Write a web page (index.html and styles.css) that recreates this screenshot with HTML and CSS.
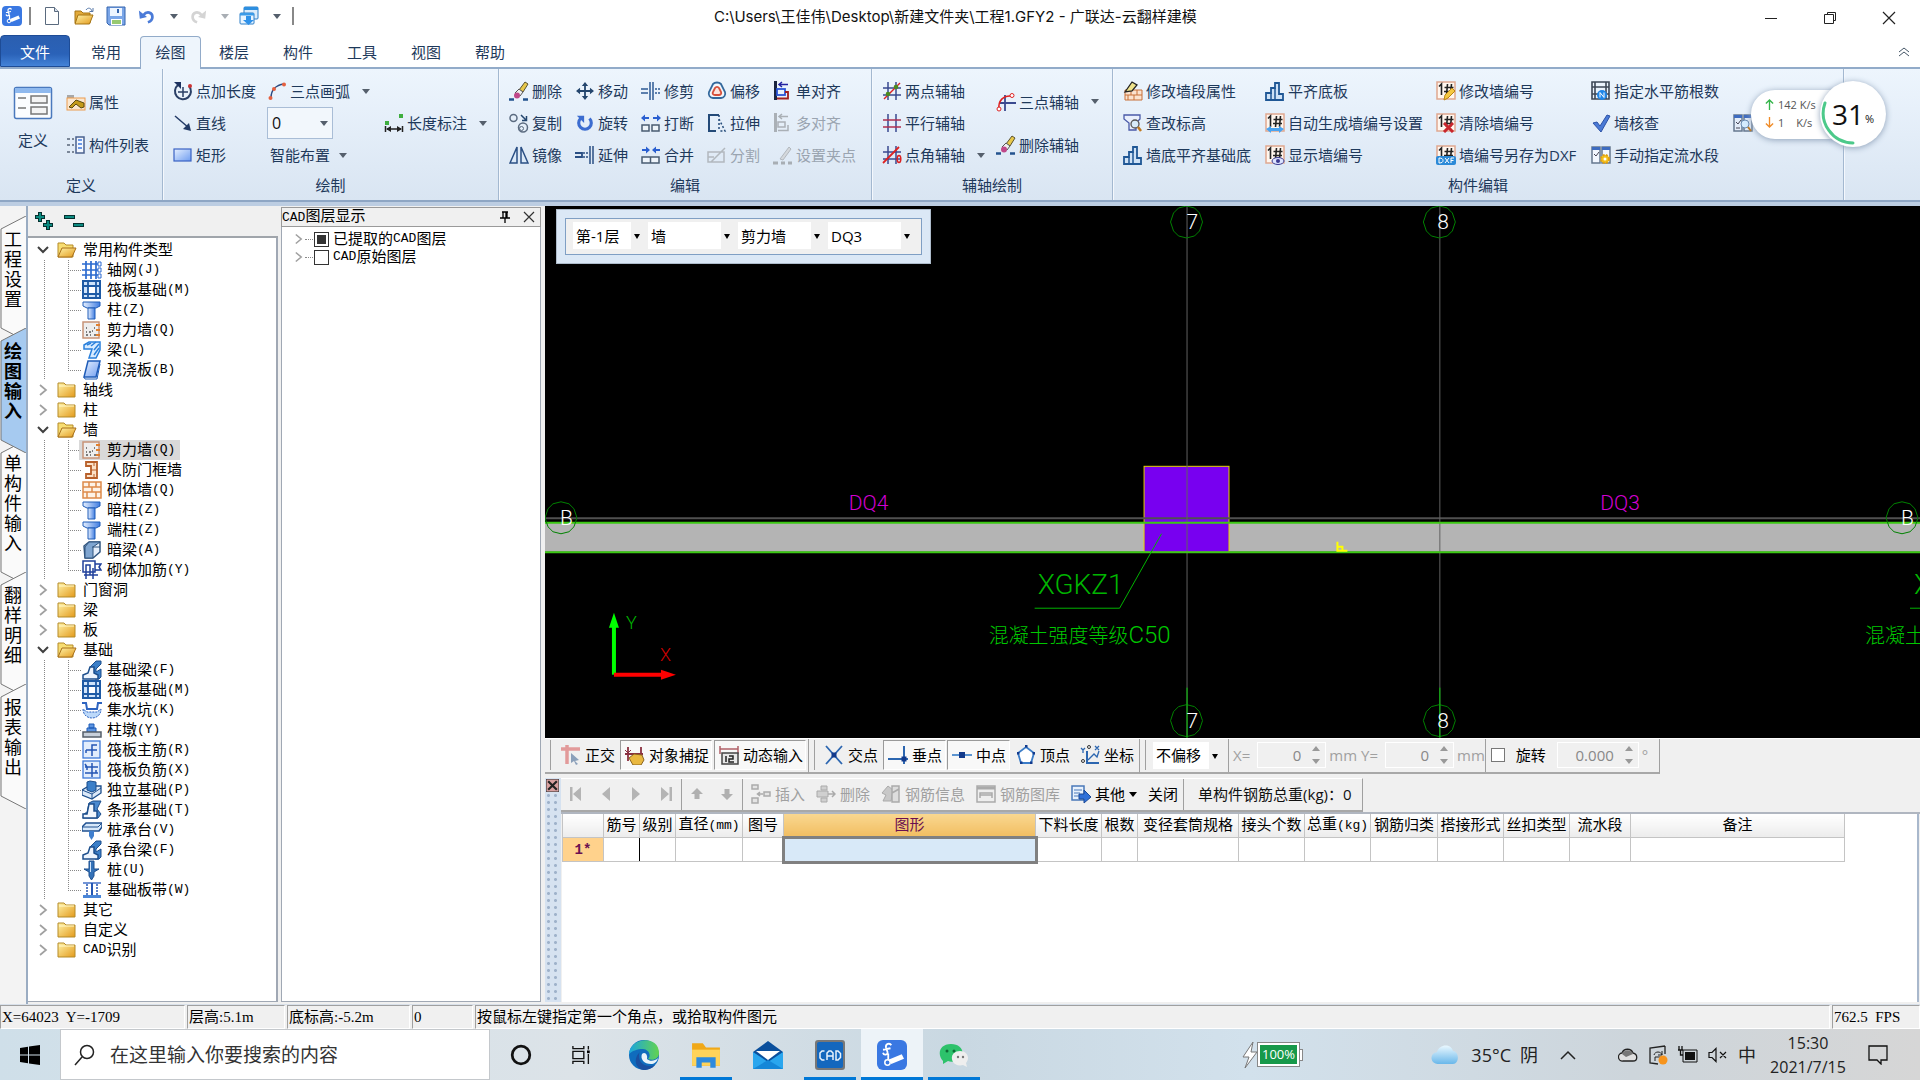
FILE: index.html
```html
<!DOCTYPE html>
<html lang="zh-CN">
<head>
<meta charset="utf-8">
<title>广联达-云翻样建模</title>
<link rel="stylesheet" href="styles.css">
</head>
<body>
<svg class="defs" aria-hidden="true">
<defs>
<linearGradient id="gFold" x1="0" y1="0" x2="1" y2="1"><stop offset="0" stop-color="#fff3a8"/><stop offset="1" stop-color="#e39a1c"/></linearGradient>
<linearGradient id="gBlue" x1="0" y1="0" x2="1" y2="1"><stop offset="0" stop-color="#e6f0ff"/><stop offset="1" stop-color="#6f9df0"/></linearGradient>
<linearGradient id="gCol" x1="0" y1="0" x2="1" y2="0"><stop offset="0" stop-color="#e6f0ff"/><stop offset="1" stop-color="#3f7ce0"/></linearGradient>
<linearGradient id="gCloud" x1="0" y1="0" x2="0" y2="1"><stop offset="0" stop-color="#eaf8ff"/><stop offset="1" stop-color="#69b7ea"/></linearGradient>
<linearGradient id="gEdge" x1="0" y1="0" x2="1" y2="0"><stop offset="0" stop-color="#1ba5de"/><stop offset="1" stop-color="#63d34f"/></linearGradient>
</defs>
<symbol id="logo" viewBox="0 0 20 20"><rect width="20" height="20" rx="4" fill="#3a78e2"/><path d="M9.500 3.500c-1-1.800-4-1-3.500 1.500l1 3c.5 2-2.500 2.500-3 .5M4 6.500l5-1M7.500 9v4" stroke="#fff" stroke-width="1.200" fill="none"/><path d="M8 13l8.500-3.500 1.500 3L9.500 16z" fill="#fff"/><circle cx="7" cy="15" r="1.800" fill="none" stroke="#fff"/></symbol>
<symbol id="new" viewBox="0 0 20 20"><path d="M3.500 1.500h9l4 4v13h-13z" fill="#fff" stroke="#5a6a7e"/><path d="M12.500 1.500v4h4" fill="#d6dfec" stroke="#5a6a7e"/></symbol>
<symbol id="open" viewBox="0 0 20 20"><path d="M1 5h6l2 2h7v10H1z" fill="#e2aa3a" stroke="#a57414"/><path d="M4 9h15l-3.500 9H1z" fill="url(#gFold)" stroke="#a57414"/><path d="M12 4c2-3 5-2 6 1m1-3v3.500h-3.500" stroke="#5577a8" fill="none"/></symbol>
<symbol id="save" viewBox="0 0 20 20"><path d="M1 1h18v18H3l-2-2z" fill="#7ba6e8" stroke="#3565ae"/><rect x="4" y="2" width="12" height="8" fill="#eef5ff"/><rect x="5" y="13" width="11" height="6" fill="#fff"/><path d="M6 15h9M6 17h9" stroke="#76b843" stroke-width="1.500"/><rect x="11" y="3" width="2" height="4" fill="#3565ae"/></symbol>
<symbol id="undo" viewBox="0 0 20 20"><path d="M6 9c4-5 10-3 10 2 0 3-2 5-5 6" fill="none" stroke="#4b7bd8" stroke-width="3"/><path d="M1 4l1 9 8-2z" fill="#4b7bd8"/></symbol>
<symbol id="redo" viewBox="0 0 20 20"><path d="M14 9C10 4 4 6 4 11c0 3 2 5 5 6" fill="none" stroke="#d4d4d4" stroke-width="3"/><path d="M19 4l-1 9-8-2z" fill="#d4d4d4"/></symbol>
<symbol id="windows" viewBox="0 0 20 20"><rect x="5" y="1" width="14" height="12" rx="1" fill="#dcecfb" stroke="#2d7fc8"/><rect x="5" y="1" width="14" height="3" fill="#2d8fe0"/><rect x="1" y="7" width="14" height="11" rx="1" fill="#eaf5ff" stroke="#2d7fc8"/><rect x="1" y="7" width="14" height="2.500" fill="#3c9be8"/><path d="M7 10h5v4h3l-5.500 5L4 14h3z" fill="#2f92ea"/></symbol>
<symbol id="define" viewBox="0 0 40 34"><rect x="1.500" y="1.500" width="37" height="31" rx="2" fill="#fbfdff" stroke="#4a79bd" stroke-width="1.500"/><path d="M2 2h36v5H2z" fill="#8fb9ee"/><path d="M5 12h8M5 22h8" stroke="#777" stroke-width="1.500"/><rect x="18" y="10" width="16" height="7" fill="#f4f4f4" stroke="#777" stroke-width="1.500"/><rect x="18" y="21" width="16" height="7" fill="#f4f4f4" stroke="#777" stroke-width="1.500"/></symbol>
<symbol id="prop" viewBox="0 0 20 20"><path d="M1 3h7v3H1z" fill="#a8a8a8"/><rect x="1" y="6" width="18" height="12" fill="#fbe7cf" stroke="#ec9b4f"/><path d="M3 15l7-7 8 3v4l-3 1-5-4-4 4z" fill="#c39a1a" stroke="#5a4a10"/></symbol>
<symbol id="list" viewBox="0 0 20 20"><rect x="10" y="2" width="8" height="16" fill="#f3f7ff" stroke="#49618e" stroke-width="1.500"/><path d="M12 5h4M12 9h4M12 13h4" stroke="#3f7be0" stroke-width="1.500"/><path d="M1 4h3M1 10h3M1 17h3M6 4h2M6 10h2M6 17h2" stroke="#7b8798" stroke-width="2"/></symbol>
<symbol id="ptlen" viewBox="0 0 20 20"><path d="M5 4a8 8 0 1 0 11 1" fill="none" stroke="#2a3f66" stroke-width="2"/><path d="M1 1h7v7z" fill="#1d3260"/><path d="M10 6v10M5 11h10" stroke="#2a3f66" stroke-width="1.500"/><circle cx="17" cy="5" r="2" fill="#c33"/></symbol>
<symbol id="line" viewBox="0 0 20 20"><path d="M2 3l14 12" stroke="#223a66" stroke-width="1.500"/><path d="M18 18l-8-2 6-6z" fill="#223a66"/></symbol>
<symbol id="rect" viewBox="0 0 20 20"><rect x="1" y="4" width="17" height="12" fill="url(#gBlue)" stroke="#3a62c4" stroke-width="1.200"/></symbol>
<symbol id="arc" viewBox="0 0 20 20"><path d="M4 17C4 9 9 4 17 3" fill="none" stroke="#2a4a80" stroke-width="1.500"/><g fill="#e5603f"><circle cx="3.500" cy="17" r="2"/><circle cx="7" cy="8" r="2"/><circle cx="17" cy="3.500" r="2"/></g></symbol>
<symbol id="dim" viewBox="0 0 20 20"><path d="M1.500 13v6M18.500 13v6M3 16h14" stroke="#222" stroke-width="1.500"/><path d="M2 16l5-3v6zM18 16l-5-3v6z" fill="#222"/><rect x="1" y="8" width="4" height="4" fill="#3fae3f"/><rect x="15" y="1" width="4" height="4" fill="#3fae3f"/></symbol>
<symbol id="erase" viewBox="0 0 20 20"><path d="M10 9l6-8 3 2-5 8z" fill="#e8c84a" stroke="#5a5230"/><path d="M6 12l4-4 4 3-3 4z" fill="#eee" stroke="#555"/><circle cx="8" cy="14.500" r="3" fill="#c0488a"/><path d="M0 18.500h5M14 18.500h5" stroke="#23538f" stroke-width="2.500"/></symbol>
<symbol id="move" viewBox="0 0 20 20"><path d="M10 3v14M3 10h14" stroke="#24466e" stroke-width="2"/><path d="M10 0l3.500 4.500h-7zM10 20l3.500-4.500h-7zM0 10l4.500-3.500v7zM20 10l-4.500-3.500v7z" fill="#24466e"/></symbol>
<symbol id="trim" viewBox="0 0 20 20"><path d="M0 8h7M0 12h7" stroke="#2c5a94" stroke-width="1.500"/><path d="M9 1v18M12 1v18" stroke="#2c5a94" stroke-width="1.500"/><path d="M14 8h6M14 12h6" stroke="#2c5a94" stroke-width="1.500" stroke-dasharray="2 1"/></symbol>
<symbol id="offset" viewBox="0 0 20 20"><path d="M6 3c2-2 6-2 8 0l4 8c1 3-1 6-4 6H6c-3 0-5-3-4-6z" fill="#f2f7fc" stroke="#33689c" stroke-width="1.800"/><path d="M8 7c1-1.500 3-1.500 4 0l2 4c1 2-1 3-2 3H8c-2 0-3-1.500-2-3z" fill="#fce4de" stroke="#d6503b" stroke-width="1.800"/></symbol>
<symbol id="align" viewBox="0 0 20 20"><path d="M2.500 0v19" stroke="#1a2440" stroke-width="3"/><rect x="4" y="8" width="8" height="6" fill="none" stroke="#2b55d8" stroke-width="1.800"/><path d="M4 17.500h11V11h-3" fill="none" stroke="#a02020" stroke-width="1.800"/><path d="M6 3.500h9M9 1L6 3.500 9 6" stroke="#2222a0" stroke-width="1.500" fill="none"/></symbol>
<symbol id="alignx" viewBox="0 0 20 20"><path d="M2.500 0v19" stroke="#aab0b6" stroke-width="3"/><path d="M5 9h7v5H5zM5 17.500h10V12M6 3.500h9M9 1L6 3.500 9 6" fill="none" stroke="#aab0b6" stroke-width="1.500"/></symbol>
<symbol id="copy" viewBox="0 0 20 20"><circle cx="4.500" cy="5" r="3.500" fill="none" stroke="#5b6b80" stroke-width="1.500"/><circle cx="14" cy="14.500" r="4.500" fill="none" stroke="#5b6b80" stroke-width="1.500"/><circle cx="12.500" cy="15.500" r="2" fill="none" stroke="#5b6b80"/><path d="M12 2l5 5M17.500 3v4.500H13" stroke="#24466e" stroke-width="1.500" fill="none"/></symbol>
<symbol id="rotate" viewBox="0 0 20 20"><path d="M5 5a7 7 0 1 0 10 0" fill="none" stroke="#3b6cd0" stroke-width="3.500"/><path d="M1 2h8v8z" fill="#3b6cd0"/></symbol>
<symbol id="break" viewBox="0 0 20 20"><path d="M2 5h6M12 5h6" stroke="#2a5fd0" stroke-width="2"/><path d="M0 5l4-3.500v7zM20 5l-4-3.500v7z" fill="#2a5fd0"/><path d="M1 12h7v6H1zM11 12h7v6h-7z" fill="#eef4fa" stroke="#4a5c72" stroke-width="1.500"/></symbol>
<symbol id="join" viewBox="0 0 20 20"><path d="M1 5h6M13 5h6" stroke="#2a5fd0" stroke-width="2"/><path d="M9 5L5 1.500v7zM11 5l4-3.500v7z" fill="#2a5fd0"/><path d="M1 12h8.500v6H1zM9.500 12H18v6H9.500z" fill="#eef4fa" stroke="#4a5c72" stroke-width="1.500"/></symbol>
<symbol id="stretch" viewBox="0 0 20 20"><path d="M12 2H2v16h7" fill="none" stroke="#234a78" stroke-width="2"/><path d="M12 2v16M12 6l6 12h-6" fill="none" stroke="#234a78" stroke-width="1.500" stroke-dasharray="2 2"/></symbol>
<symbol id="mirror" viewBox="0 0 20 20"><path d="M8 2v16H1zM12 2v16h7z" fill="#dbe9f8" stroke="#2a4f84" stroke-width="1.500"/></symbol>
<symbol id="extend" viewBox="0 0 20 20"><path d="M0 8h7v4H0" fill="none" stroke="#2a4f84" stroke-width="1.800"/><path d="M8 8h6M8 12h6" stroke="#2a4f84" stroke-width="1.500" stroke-dasharray="2 1"/><path d="M15 1v18M18 1v18" stroke="#2a4f84" stroke-width="1.500"/></symbol>
<symbol id="split" viewBox="0 0 20 20"><path d="M1 7h16v10H1zM4 17L18 3M1 12h6" fill="none" stroke="#b2b8be" stroke-width="1.500"/></symbol>
<symbol id="grip" viewBox="0 0 20 20"><path d="M7 14L16 2l2 2-8 11z" fill="#d4d8dc" stroke="#b2b8be"/><path d="M0 18h5M8 18h4M15 18h4" stroke="#a8aeb4" stroke-width="3"/></symbol>
<symbol id="ax2" viewBox="0 0 20 20"><path d="M6 1v18M14 1v18M1 7h18M1 14h18" stroke="#3a4a90" stroke-width="1.500"/><path d="M2 18L18 2" stroke="#d22" stroke-width="1.500"/><circle cx="6" cy="13" r="2.300" fill="#4c8a20"/><circle cx="14" cy="6" r="2.300" fill="#4c8a20"/></symbol>
<symbol id="axp" viewBox="0 0 20 20"><path d="M6 1v18M14 1v18" stroke="#3a4a90" stroke-width="1.500"/><path d="M1 7h18M1 14h18" stroke="#b03050" stroke-width="1.500"/></symbol>
<symbol id="axa" viewBox="0 0 20 20"><path d="M6 1v18M14 1v18M1 7h18M1 14h18" stroke="#3a4a90" stroke-width="1.500"/><path d="M1 18L17 2" stroke="#d22" stroke-width="1.800"/><ellipse cx="17" cy="14" rx="1.800" ry="3.500" fill="none" stroke="#d22" stroke-width="1.500"/></symbol>
<symbol id="ax3" viewBox="0 0 20 20"><path d="M9 3v16M3 11h17" stroke="#3a4a90" stroke-width="1.800"/><path d="M3 17C2 9 7 3 16 4" fill="none" stroke="#d22" stroke-width="1.500"/><circle cx="3" cy="17" r="2" fill="#fff" stroke="#d22"/><circle cx="16" cy="3.500" r="2" fill="#fff" stroke="#d22"/></symbol>
<symbol id="brickpen" viewBox="0 0 20 20"><path d="M2 9h17v10H2z" fill="#fbe3cf" stroke="#c87038"/><path d="M2 14h17M8 9v5M14 9v5M5 14v5M11 14v5" stroke="#c87038"/><path d="M2 11L9 1l5 3-5 6z" fill="#eee28a" stroke="#222" stroke-width="1.300"/></symbol>
<symbol id="look" viewBox="0 0 20 20"><path d="M1 2h16v4l-4 4v7H6v-7L1 6z" fill="#e9effc" stroke="#4a5aa8" stroke-width="1.300"/><circle cx="12" cy="11" r="4" fill="#d8ecfa" stroke="#555" stroke-width="1.300"/><path d="M15 14l3 4" stroke="#c07a20" stroke-width="2.500"/></symbol>
<symbol id="flush" viewBox="0 0 20 20"><path d="M1 12h5V7h4V2h4v11h4v6H1z" fill="#cfe2f6" stroke="#1f5795" stroke-width="1.800"/><path d="M10 7v12M6 12v7" stroke="#1f5795" stroke-width="1.500"/></symbol>
<symbol id="num" viewBox="0 0 20 20"><rect x="1" y="1" width="18" height="17" fill="#fff6ee" stroke="#e0a890" stroke-width="1.500"/><path d="M3 5.500L5.500 3v11M11.500 3l-1 11M15.500 3l-1 11M8.500 6.500h9M8 10.500h9" fill="none" stroke="#222" stroke-width="1.600"/></symbol>
<symbol id="numset" viewBox="0 0 20 20"><use href="#num"/><path d="M1 16l5-3v2h8v-2l5 3-5 4v-2H6v2z" fill="#4aa3f0"/></symbol>
<symbol id="numeye" viewBox="0 0 20 20"><use href="#num"/><ellipse cx="13" cy="16" rx="6" ry="3.500" fill="#dce4ff" stroke="#3a3a90"/><circle cx="13" cy="16" r="2" fill="#3a3a90"/></symbol>
<symbol id="numpen" viewBox="0 0 20 20"><use href="#num"/><path d="M8 19l1-5 7-7 3 3-7 7z" fill="#f5c842" stroke="#b98414"/></symbol>
<symbol id="numx" viewBox="0 0 20 20"><use href="#num"/><path d="M8 10l9 9M17 10l-9 9" stroke="#c8262c" stroke-width="3"/></symbol>
<symbol id="numdxf" viewBox="0 0 20 20"><use href="#num"/><rect y="11" width="20" height="9" rx="2" fill="#2b8ad8"/><path d="M3 13v5c3 0 4-1 4-2.500S6 13 3 13zM9 13l4 5M13 13l-4 5M15 18v-5h3M15 15.500h2.500" stroke="#fff" fill="none"/></symbol>
<symbol id="rebar" viewBox="0 0 20 20"><path d="M1 1h17v17H1zM1 6h17M1 13h17M4 1v17M15 1v17" fill="none" stroke="#3d4756" stroke-width="1.600"/><circle cx="11" cy="14" r="5" fill="#1f86e8"/><path d="M9 16.500v-5l4 5v-5" stroke="#fff" fill="none"/></symbol>
<symbol id="check" viewBox="0 0 20 20"><path d="M2 10l4-1 3 4 7-11 3 1L10 19z" fill="#4a7ad6" stroke="#2d52a6"/></symbol>
<symbol id="flow" viewBox="0 0 20 20"><path d="M1 2h8v16H1zM11 2h8v16h-8z" fill="#f2f7ff" stroke="#65788f" stroke-width="1.500"/><path d="M1 2h8v3H1zM11 2h8v3h-8z" fill="#3e6cc0"/><path d="M3 9l2 2 3-4" stroke="#445" fill="none"/><circle cx="14" cy="14" r="4" fill="#f6c31c" stroke="#e0a010" stroke-width="2" stroke-dasharray="2 1.200"/><circle cx="14" cy="14" r="1.500" fill="#fff"/></symbol>
<symbol id="flowq" viewBox="0 0 20 20"><path d="M1 2h8v16H1zM11 2h8v16h-8z" fill="#e4edf9" stroke="#65788f" stroke-width="1.500"/><path d="M1 2h8v3H1zM11 2h8v3h-8z" fill="#3e6cc0"/><path d="M3 9l2 2 3-4M3 15h4" stroke="#445" fill="none"/><circle cx="12" cy="11" r="4" fill="#d5ecff" stroke="#6a8ab0"/><path d="M15 14l3 4" stroke="#c07a20" stroke-width="2"/></symbol>
<symbol id="fopen" viewBox="0 0 20 20"><path d="M1 3h6l2 2h7v12H1z" fill="#f7dd72" stroke="#b58b28"/><path d="M5 8h14l-4 9H1z" fill="url(#gFold)" stroke="#a8701c"/></symbol>
<symbol id="fclosed" viewBox="0 0 20 20"><path d="M1 3h6l2 2h9v12H1z" fill="url(#gFold)" stroke="#b58b28"/><path d="M2 6h15" stroke="#fff8c8"/></symbol>
<symbol id="grid" viewBox="0 0 20 20"><path d="M4 1v18M9 1v18M14 1v18M0 4h16M0 10h16M0 15h16" stroke="#2c6bd0" stroke-width="1.700"/><path d="M16 2h3v4h-3zM16 8h3v4h-3zM16 14h3v4h-3z" fill="#fff" stroke="#2c6bd0"/></symbol>
<symbol id="raft" viewBox="0 0 20 20"><rect x="1" y="1" width="17" height="17" fill="#cfe3fa" stroke="#1e5aa5" stroke-width="2"/><path d="M6 1v17M14 1v17M1 6h17M1 14h17" stroke="#1e5aa5" stroke-width="1.800"/><rect x="7" y="7" width="6" height="6" fill="#fff"/></symbol>
<symbol id="col" viewBox="0 0 20 20"><path d="M1 2h17v4l-4 2H5L1 6z" fill="url(#gCol)" stroke="#1f5cb8"/><path d="M6 8h7v11H6z" fill="url(#gCol)" stroke="#1f5cb8"/></symbol>
<symbol id="shear" viewBox="0 0 20 20"><rect x="1" y="2" width="16" height="16" fill="#eee" stroke="#c89478" stroke-width="1.500"/><path d="M4 12h1M7 12h2M4 15h2M10 11h1M12 15h2M8 15h1M12 8h1M4 8h1" stroke="#555" stroke-width="1.500"/><path d="M14 5h4M14 10h4M14 15h4" stroke="#e08030" stroke-width="2"/></symbol>
<symbol id="beam" viewBox="0 0 20 20"><path d="M2 5l5-3h11v8l-4 8H7l3-9H2z" fill="#d8ebff" stroke="#2a80dc" stroke-width="1.500"/><path d="M5 5l4-2M9 6l5-4M12 10l5-6M12 15l5-7" stroke="#2a80dc" stroke-width="1.500"/></symbol>
<symbol id="slab" viewBox="0 0 20 20"><path d="M6 1h12l-4 16H2z" fill="url(#gBlue)" stroke="#1f5cb8" stroke-width="1.500"/><path d="M2 17l1 2h12l3-15" fill="none" stroke="#1f5cb8"/></symbol>
<symbol id="door" viewBox="0 0 20 20"><path d="M4 2h11v16H4v-4h5V6H4z" fill="#fce2c8" stroke="#b8602a" stroke-width="1.800"/><path d="M9 10h6M12 2v4M12 14v4" stroke="#b8602a"/></symbol>
<symbol id="brick" viewBox="0 0 20 20"><rect x="1" y="2" width="18" height="16" fill="#fdf3e8" stroke="#dd8a4a" stroke-width="1.500"/><path d="M1 7h18M1 12h18M7 2v5M14 2v5M10 7v5M5 12v6M14 12v6" stroke="#dd8a4a" stroke-width="1.500"/></symbol>
<symbol id="hbeam" viewBox="0 0 20 20"><path d="M2 6l5-4h11v10l-7 6H3z" fill="#e5eefa" stroke="#30557f" stroke-width="1.500"/><path d="M7 2l11 0-7 5v11H3V7z" fill="#7fa5d0" stroke="#30557f"/><path d="M10 7h8" stroke="#30557f"/></symbol>
<symbol id="brebar" viewBox="0 0 20 20"><path d="M1 1h12v11H1zM4 19V5h4v10M11 19V8M13 4h6l-2 3 2 3h-6M2 15h14" fill="none" stroke="#20409c" stroke-width="1.500"/></symbol>
<symbol id="fbeam" viewBox="0 0 20 20"><path d="M8 7l6-6h5v3l-5 5v3l5-3v8l-2 2h-4z" fill="#3b7fc8" stroke="#1c4e8c"/><path d="M1 15l5-2 2-6h4v6l4 2v4H1z" fill="#eef5fd" stroke="#1c4e8c" stroke-width="1.500"/></symbol>
<symbol id="pit" viewBox="0 0 20 20"><path d="M0 3h4l1 6h10l1-6h4" fill="none" stroke="#2d63c0" stroke-width="2"/><path d="M1 9c0 12 18 12 18 0l-4 3H5z" fill="#bcd9fa" stroke="#2d63c0" stroke-dasharray="2 1"/></symbol>
<symbol id="pier" viewBox="0 0 20 20"><path d="M7 4h5v4H7zM5 8h9v4H5z" fill="#5c94e0" stroke="#1f5cb8"/><path d="M1 12h18v5H1z" fill="#c8d0da" stroke="#555f6a" stroke-width="1.500"/></symbol>
<symbol id="rmain" viewBox="0 0 20 20"><rect x="1" y="1" width="17" height="17" fill="#e2edfc" stroke="#3c78d8" stroke-width="1.300"/><path d="M4 10h11M10 16V5h5M4 10v3" fill="none" stroke="#2456b4" stroke-width="1.500"/></symbol>
<symbol id="rneg" viewBox="0 0 20 20"><rect x="1" y="1" width="17" height="17" fill="#e2edfc" stroke="#3c78d8" stroke-width="1.300"/><path d="M3 7h13M3 13h13M10 3v14M5 7v3M14 10v3M3 4l2 3" fill="none" stroke="#2456b4" stroke-width="1.500"/></symbol>
<symbol id="indep" viewBox="0 0 20 20"><path d="M0 10l7-4h12v7l-9 6-10-4z" fill="#dce9f8" stroke="#1c4e8c" stroke-width="1.300"/><path d="M0 10l10 4 9-6M10 14v5" fill="none" stroke="#1c4e8c"/><path d="M5 2l3-1 6 1v8l-4 2-5-2z" fill="#3b7fc8" stroke="#1c4e8c"/></symbol>
<symbol id="strip" viewBox="0 0 20 20"><path d="M7 3l4-2h8l-4 8 4 5-3 4H1l2-5h2z" fill="#4a8ad0" stroke="#1c4e8c"/><path d="M7 4h5v7h3v7H1v-4h4z" fill="#f2f7fd" stroke="#1c4e8c" stroke-width="1.500"/></symbol>
<symbol id="cap" viewBox="0 0 20 20"><path d="M0 7l4-4h16v4l-3 4H0z" fill="#d7e8fa" stroke="#1f5090" stroke-width="1.500"/><path d="M0 7h16l4-4" stroke="#1f5090" fill="none"/><path d="M7 11h5v5l-2.500 4L7 16z" fill="#3f7fce"/></symbol>
<symbol id="pile" viewBox="0 0 20 20"><path d="M7 1h5v8h5l-5 3v4l-2.500 4L7 16v-4L2 9h5z" fill="#3472b8" stroke="#1f5090"/><path d="M8.500 2v10" stroke="#cfe3fa"/></symbol>
<symbol id="band" viewBox="0 0 20 20"><path d="M1 3h18" stroke="#4472c8" stroke-width="1.500"/><path d="M1 15h18v3H1z" fill="#4a86d8"/><path d="M5 4v12M15 4v12" stroke="#2456b4" stroke-width="1.500" stroke-dasharray="2 1"/><path d="M10 3v12" stroke="#2456b4" stroke-width="2"/></symbol>
<symbol id="down" viewBox="0 0 8 5"><path d="M0 0h8L4 5z" fill="#555f6c"/></symbol>
<symbol id="chr" viewBox="0 0 10 12"><path d="M2 1l6 5-6 5" fill="none" stroke="#a0a0a0" stroke-width="1.700"/></symbol>
<symbol id="chd" viewBox="0 0 12 8"><path d="M1 1l5 5 5-5" fill="none" stroke="#404040" stroke-width="2"/></symbol>
<symbol id="ortho" viewBox="0 0 20 20"><path d="M0 4h19M6 0v19" stroke="#e29a9a" stroke-width="3.500"/><path d="M10 8l8 7-4 1 3 3-2 1-2-4-3 2z" fill="#8ba0ba"/></symbol>
<symbol id="snap" viewBox="0 0 20 20"><path d="M3 2v14M16 2v10M0 9h18" stroke="#8a3040" stroke-width="1.800"/><path d="M4 13l5-4 8 1 2 5-3 5H8z" fill="#e9b840" stroke="#8a6420"/><path d="M3 8l-3-3M3 8l3-3" stroke="#8a3040"/></symbol>
<symbol id="dyn" viewBox="0 0 20 20"><path d="M1 1v8M19 1v8M1 4h18" stroke="#b06068" stroke-width="1.500"/><rect x="3" y="8" width="16" height="11" fill="#e8e8e8" stroke="#444" stroke-width="1.500"/><path d="M7 11v6M10 11h4v3h-4v3h5" stroke="#222" stroke-width="1.500" fill="none"/></symbol>
<symbol id="cross" viewBox="0 0 20 20"><path d="M2 1l16 18M18 1L2 19" stroke="#2c66b0" stroke-width="1.800"/><rect x="7.500" y="7.500" width="5" height="5" fill="#123a8c"/></symbol>
<symbol id="perp" viewBox="0 0 20 20"><path d="M16 1v18M0 14h20" stroke="#2c66b0" stroke-width="2"/><rect x="13.500" y="11.500" width="5" height="5" fill="#123a8c"/></symbol>
<symbol id="mid" viewBox="0 0 20 20"><path d="M0 10h20" stroke="#5c94d0" stroke-width="2"/><rect x="7" y="7" width="6" height="6" fill="#123a8c"/></symbol>
<symbol id="vert" viewBox="0 0 20 20"><path d="M10 2l8 6-3 10H5L2 8z" fill="#fff" stroke="#3a7cc8" stroke-width="1.800"/><path d="M9 0h2.500v2.500H9zM1 7h2.500v2.500H1zM16.500 7H19v2.500h-2.500zM4 16.500h2.500V19H4zM14 16.500h2.500V19H14z" fill="#123a8c"/></symbol>
<symbol id="coord" viewBox="0 0 20 20"><path d="M7 6v12h12" fill="none" stroke="#2c66b0" stroke-width="2"/><path d="M8 15l6-6 3 3 2-6M1 3l2 2 2-2M3 5v3M15 1l4 4M19 1l-4 4" stroke="#2c66b0" stroke-width="1.300" fill="none"/><circle cx="3" cy="16" r="1.500" fill="none" stroke="#333"/><circle cx="9" cy="2" r="1.500" fill="none" stroke="#333"/></symbol>
<symbol id="first" viewBox="0 0 14 16"><path d="M1 1h2.500v14H1zM12 1v14L4 8z" fill="#b4b4b4"/></symbol>
<symbol id="prev" viewBox="0 0 14 16"><path d="M11 1v14L3 8z" fill="#b4b4b4"/></symbol>
<symbol id="next" viewBox="0 0 14 16"><path d="M3 1v14l8-7z" fill="#b4b4b4"/></symbol>
<symbol id="last" viewBox="0 0 14 16"><path d="M13 1h-2.500v14H13zM2 1v14l8-7z" fill="#b4b4b4"/></symbol>
<symbol id="up" viewBox="0 0 14 16"><path d="M7 2l6 6h-3.500v5h-5V8H1z" fill="#b0b0b0"/></symbol>
<symbol id="dn" viewBox="0 0 14 16"><path d="M7 14l6-6H9.500V3h-5v5H1z" fill="#b0b0b0"/></symbol>
<symbol id="ins" viewBox="0 0 20 20"><path d="M1 1h6v4H1zM1 14h6v5H1zM13 8h6v4h-6z" fill="#e4e4e4" stroke="#aaa" stroke-width="1.500"/><path d="M7 10h5M9 8l-2.500 2L9 12" stroke="#aaa" stroke-width="1.500" fill="none"/></symbol>
<symbol id="del" viewBox="0 0 20 20"><path d="M5 2h6v4H5zM1 7h11v6H1zM5 14h6v4H5z" fill="#d0d0d0" stroke="#aaa"/><path d="M12 10h7M16 7l3 3-3 3" stroke="#aaa" stroke-width="1.500" fill="none"/></symbol>
<symbol id="info" viewBox="0 0 20 20"><path d="M1 9l6-7 5 4-2 11H2l3-6z" fill="#c8c8c8" stroke="#aaa"/><path d="M11 2h7v16h-7zM11 9l7-4" fill="#ddd" stroke="#aaa" stroke-width="1.500"/></symbol>
<symbol id="lib" viewBox="0 0 20 20"><rect x="1" y="2" width="18" height="16" fill="#eee" stroke="#aaa" stroke-width="1.500"/><path d="M1 4h18" stroke="#aaa" stroke-width="3"/><path d="M4 14V9h12v5M4 11h12" stroke="#aaa" fill="none" stroke-width="1.500"/></symbol>
<symbol id="other" viewBox="0 0 20 20"><path d="M1 2h12v14H1z" fill="#e8f1fc" stroke="#4a78b8" stroke-width="1.500"/><path d="M3 6h8M3 9h6M3 12h5" stroke="#4a78b8"/><path d="M8 10h5V6l7 7-7 6v-4H8z" fill="#2f70d8" stroke="#1c4a98"/></symbol>
</svg>

<header class="titlebar">
  <div class="quick">
    <svg class="i20"><use href="#logo"/></svg><i class="bar"></i>
    <button class="qb" aria-label="新建"><svg class="i20"><use href="#new"/></svg></button>
    <button class="qb" aria-label="打开"><svg class="i20"><use href="#open"/></svg></button>
    <button class="qb" aria-label="保存"><svg class="i20"><use href="#save"/></svg></button>
    <button class="qb drop" aria-label="撤销"><svg class="i18"><use href="#undo"/></svg><svg class="dd"><use href="#down"/></svg></button>
    <button class="qb drop" aria-label="恢复"><svg class="i18"><use href="#redo"/></svg><svg class="dd faded"><use href="#down"/></svg></button>
    <button class="qb drop" aria-label="窗口"><svg class="i20"><use href="#windows"/></svg><svg class="dd"><use href="#down"/></svg></button><i class="bar"></i>
  </div>
  <h1>C:\Users\王佳伟\Desktop\新建文件夹\工程1.GFY2 - 广联达-云翻样建模</h1>
  <div class="winctl">
    <button aria-label="最小化"><svg viewBox="0 0 14 14"><path d="M1 7.500h12" stroke="#222"/></svg></button>
    <button aria-label="还原"><svg viewBox="0 0 14 14"><path d="M1.500 3.500h9v9h-9zM4.500 3.500v-2h8v8h-2" fill="none" stroke="#222"/></svg></button>
    <button aria-label="关闭"><svg viewBox="0 0 14 14"><path d="M1 1l12 12M13 1L1 13" stroke="#222" stroke-width="1.200"/></svg></button>
  </div>
</header>

<nav class="tabs">
  <button class="file">文件</button><button>常用</button><button class="on">绘图</button><button>楼层</button><button>构件</button><button>工具</button><button>视图</button><button>帮助</button>
  <button class="fold" aria-label="折叠"><svg viewBox="0 0 12 10"><path d="M1 5l5-4 5 4M1 9l5-4 5 4" fill="none" stroke="#456"/></svg></button>
</nav>

<section class="ribbon">
  <div class="group g1"><div class="cols">
    <button class="big"><svg><use href="#define"/></svg><span>定义</span></button>
    <div class="col two"><button class="rb"><svg class="i20"><use href="#prop"/></svg>属性</button><button class="rb"><svg class="i20"><use href="#list"/></svg>构件列表</button></div>
  </div><h2>定义</h2></div>
  <div class="group g2"><div class="cols">
    <div class="col"><button class="rb"><svg class="i20"><use href="#ptlen"/></svg>点加长度</button><button class="rb"><svg class="i20"><use href="#line"/></svg>直线</button><button class="rb"><svg class="i20"><use href="#rect"/></svg>矩形</button></div>
    <div class="col"><button class="rb"><svg class="i20"><use href="#arc"/></svg>三点画弧<svg class="dd"><use href="#down"/></svg></button><label class="combo"><select aria-label="角度"><option>0</option></select><svg class="dd"><use href="#down"/></svg></label><button class="rb plain">智能布置<svg class="dd"><use href="#down"/></svg></button></div>
    <div class="col two"><button class="rb"><svg class="i20"><use href="#dim"/></svg>长度标注<svg class="dd"><use href="#down"/></svg></button></div>
  </div><h2>绘制</h2></div>
  <div class="group g3"><div class="cols">
    <div class="col"><button class="rb"><svg class="i20"><use href="#erase"/></svg>删除</button><button class="rb"><svg class="i20"><use href="#copy"/></svg>复制</button><button class="rb"><svg class="i20"><use href="#mirror"/></svg>镜像</button></div>
    <div class="col"><button class="rb"><svg class="i20 sm"><use href="#move"/></svg>移动</button><button class="rb"><svg class="i20 sm"><use href="#rotate"/></svg>旋转</button><button class="rb"><svg class="i20"><use href="#extend"/></svg>延伸</button></div>
    <div class="col"><button class="rb"><svg class="i20"><use href="#trim"/></svg>修剪</button><button class="rb"><svg class="i20"><use href="#break"/></svg>打断</button><button class="rb"><svg class="i20"><use href="#join"/></svg>合并</button></div>
    <div class="col"><button class="rb"><svg class="i20"><use href="#offset"/></svg>偏移</button><button class="rb"><svg class="i20"><use href="#stretch"/></svg>拉伸</button><button class="rb" disabled><svg class="i20"><use href="#split"/></svg>分割</button></div>
    <div class="col"><button class="rb"><svg class="i20"><use href="#align"/></svg>单对齐</button><button class="rb" disabled><svg class="i20"><use href="#alignx"/></svg>多对齐</button><button class="rb" disabled><svg class="i20"><use href="#grip"/></svg>设置夹点</button></div>
  </div><h2>编辑</h2></div>
  <div class="group g4"><div class="cols">
    <div class="col"><button class="rb"><svg class="i20"><use href="#ax2"/></svg>两点辅轴</button><button class="rb"><svg class="i20"><use href="#axp"/></svg>平行辅轴</button><button class="rb"><svg class="i20"><use href="#axa"/></svg>点角辅轴<svg class="dd"><use href="#down"/></svg></button></div>
    <div class="col two"><button class="rb"><svg class="i20"><use href="#ax3"/></svg>三点辅轴<svg class="dd"><use href="#down"/></svg></button><button class="rb"><svg class="i20"><use href="#erase"/></svg>删除辅轴</button></div>
  </div><h2>辅轴绘制</h2></div>
  <div class="group g5"><div class="cols">
    <div class="col"><button class="rb"><svg class="i20"><use href="#brickpen"/></svg>修改墙段属性</button><button class="rb"><svg class="i20"><use href="#look"/></svg>查改标高</button><button class="rb"><svg class="i20"><use href="#flush"/></svg>墙底平齐基础底</button></div>
    <div class="col"><button class="rb"><svg class="i20"><use href="#flush"/></svg>平齐底板</button><button class="rb"><svg class="i20"><use href="#numset"/></svg>自动生成墙编号设置</button><button class="rb"><svg class="i20"><use href="#numeye"/></svg>显示墙编号</button></div>
    <div class="col"><button class="rb"><svg class="i20"><use href="#numpen"/></svg>修改墙编号</button><button class="rb"><svg class="i20"><use href="#numx"/></svg>清除墙编号</button><button class="rb"><svg class="i20"><use href="#numdxf"/></svg>墙编号另存为DXF</button></div>
    <div class="col"><button class="rb"><svg class="i20"><use href="#rebar"/></svg>指定水平筋根数</button><button class="rb"><svg class="i20"><use href="#check"/></svg>墙核查</button><button class="rb"><svg class="i20"><use href="#flow"/></svg>手动指定流水段</button></div>
    <div class="col two"><button class="rb" aria-label="查询流水段"><svg class="i20"><use href="#flowq"/></svg></button></div>
  </div><h2>构件编辑</h2></div>
  <aside class="speed">
    <div class="pill"><span><svg viewBox="0 0 10 12"><path d="M5 12V1M1 5l4-4 4 4" fill="none" stroke="#35b54a" stroke-width="1.500"/></svg>142 K/s</span><span><svg viewBox="0 0 10 12"><path d="M5 0v11M1 7l4 4 4-4" fill="none" stroke="#f08c28" stroke-width="1.500"/></svg>1<b></b>K/s</span></div>
    <div class="dial"><svg viewBox="0 0 66 66"><path d="M5 22A30 30 0 0 0 33 62" fill="none" stroke="#4cc98a" stroke-width="3" stroke-linecap="round"/></svg><strong>31</strong><small>%</small></div>
  </aside>
</section>

<main>
  <nav class="side">
    <button><svg viewBox="0 0 26 125" preserveAspectRatio="none"><path d="M26 0L1 13V112L26 125"/></svg><span>工程设置</span></button>
    <button class="on"><svg viewBox="0 0 26 125" preserveAspectRatio="none"><path d="M26 0L1 13V112L26 125"/></svg><span>绘图输入</span></button>
    <button><svg viewBox="0 0 26 145" preserveAspectRatio="none"><path d="M26 0L1 13V132L26 145"/></svg><span>单构件输入</span></button>
    <button><svg viewBox="0 0 26 125" preserveAspectRatio="none"><path d="M26 0L1 13V112L26 125"/></svg><span>翻样明细</span></button>
    <button><svg viewBox="0 0 26 125" preserveAspectRatio="none"><path d="M26 0L1 13V112L26 125"/></svg><span>报表输出</span></button>
  </nav>
  <section class="treepane">
    <div class="treebar"><button aria-label="全部展开"><svg viewBox="0 0 20 20"><path d="M6 1v10M1 6h10M14 9v10M9 14h10" stroke="#06302f" stroke-width="4"/><path d="M6 2v8M2 6h8M14 10v8M10 14h8" stroke="#0b8a80" stroke-width="2"/></svg></button><button aria-label="全部折叠"><svg viewBox="0 0 20 20"><path d="M0 6h11M9 14h11" stroke="#06302f" stroke-width="4"/><path d="M1 6h9M10 14h9" stroke="#0b8a80" stroke-width="2"/></svg></button></div>
    <ul class="tree">
      <li><div class="row open"><svg class="ch"><use href="#chd"/></svg><svg class="i20"><use href="#fopen"/></svg>常用构件类型</div>
        <ul><li><span><svg class="i20"><use href="#grid"/></svg>轴网<b>(J)</b></span></li><li><span><svg class="i20"><use href="#raft"/></svg>筏板基础<b>(M)</b></span></li><li><span><svg class="i20"><use href="#col"/></svg>柱<b>(Z)</b></span></li><li><span><svg class="i20"><use href="#shear"/></svg>剪力墙<b>(Q)</b></span></li><li><span><svg class="i20"><use href="#beam"/></svg>梁<b>(L)</b></span></li><li><span><svg class="i20"><use href="#slab"/></svg>现浇板<b>(B)</b></span></li></ul></li>
      <li><div class="row"><svg class="ch"><use href="#chr"/></svg><svg class="i20"><use href="#fclosed"/></svg>轴线</div></li>
      <li><div class="row"><svg class="ch"><use href="#chr"/></svg><svg class="i20"><use href="#fclosed"/></svg>柱</div></li>
      <li><div class="row open"><svg class="ch"><use href="#chd"/></svg><svg class="i20"><use href="#fopen"/></svg>墙</div>
        <ul><li><span class="sel"><svg class="i20"><use href="#shear"/></svg>剪力墙<b>(Q)</b></span></li><li><span><svg class="i20"><use href="#door"/></svg>人防门框墙</span></li><li><span><svg class="i20"><use href="#brick"/></svg>砌体墙<b>(Q)</b></span></li><li><span><svg class="i20"><use href="#col"/></svg>暗柱<b>(Z)</b></span></li><li><span><svg class="i20"><use href="#col"/></svg>端柱<b>(Z)</b></span></li><li><span><svg class="i20"><use href="#hbeam"/></svg>暗梁<b>(A)</b></span></li><li><span><svg class="i20"><use href="#brebar"/></svg>砌体加筋<b>(Y)</b></span></li></ul></li>
      <li><div class="row"><svg class="ch"><use href="#chr"/></svg><svg class="i20"><use href="#fclosed"/></svg>门窗洞</div></li>
      <li><div class="row"><svg class="ch"><use href="#chr"/></svg><svg class="i20"><use href="#fclosed"/></svg>梁</div></li>
      <li><div class="row"><svg class="ch"><use href="#chr"/></svg><svg class="i20"><use href="#fclosed"/></svg>板</div></li>
      <li><div class="row open"><svg class="ch"><use href="#chd"/></svg><svg class="i20"><use href="#fopen"/></svg>基础</div>
        <ul><li><span><svg class="i20"><use href="#fbeam"/></svg>基础梁<b>(F)</b></span></li><li><span><svg class="i20"><use href="#raft"/></svg>筏板基础<b>(M)</b></span></li><li><span><svg class="i20"><use href="#pit"/></svg>集水坑<b>(K)</b></span></li><li><span><svg class="i20"><use href="#pier"/></svg>柱墩<b>(Y)</b></span></li><li><span><svg class="i20"><use href="#rmain"/></svg>筏板主筋<b>(R)</b></span></li><li><span><svg class="i20"><use href="#rneg"/></svg>筏板负筋<b>(X)</b></span></li><li><span><svg class="i20"><use href="#indep"/></svg>独立基础<b>(P)</b></span></li><li><span><svg class="i20"><use href="#strip"/></svg>条形基础<b>(T)</b></span></li><li><span><svg class="i20"><use href="#cap"/></svg>桩承台<b>(V)</b></span></li><li><span><svg class="i20"><use href="#fbeam"/></svg>承台梁<b>(F)</b></span></li><li><span><svg class="i20"><use href="#pile"/></svg>桩<b>(U)</b></span></li><li><span><svg class="i20"><use href="#band"/></svg>基础板带<b>(W)</b></span></li></ul></li>
      <li><div class="row"><svg class="ch"><use href="#chr"/></svg><svg class="i20"><use href="#fclosed"/></svg>其它</div></li>
      <li><div class="row"><svg class="ch"><use href="#chr"/></svg><svg class="i20"><use href="#fclosed"/></svg>自定义</div></li>
      <li><div class="row"><svg class="ch"><use href="#chr"/></svg><svg class="i20"><use href="#fclosed"/></svg><b>CAD</b>识别</div></li>
    </ul>
  </section>
  <section class="cadpane">
    <div class="cadhead"><span><b>CAD</b>图层显示</span><button aria-label="固定"><svg viewBox="0 0 12 12"><path d="M3 1h6M4 1v6M8 1v6M7 1v6M1 7h10M6 7v5" stroke="#000" stroke-width="1.300"/></svg></button><button aria-label="关闭"><svg viewBox="0 0 12 12"><path d="M1 1l10 10M11 1L1 11" stroke="#333" stroke-width="1.200"/></svg></button></div>
    <div class="cadbody">
      <label><svg class="ch"><use href="#chr"/></svg><i></i><input type="checkbox" class="part">已提取的<b>CAD</b>图层</label>
      <label><svg class="ch"><use href="#chr"/></svg><i></i><input type="checkbox"><b>CAD</b>原始图层</label>
    </div>
  </section>
  <section class="work">
    <div class="canvas">
      <svg class="drawing" viewBox="0 -1 1376 532" preserveAspectRatio="xMinYMin slice">
        <rect x="0" y="316" width="1376" height="29" fill="#b4b4b4"/>
        <rect x="599.500" y="259.500" width="85" height="86" fill="#7800f0" stroke="#e6d200"/>
        <path d="M0 311.500H1376" stroke="#505050" stroke-width="2"/>
        <path d="M642.500 -1V531M895.500 -1V531" stroke="#606060"/>
        <path d="M0 316H1376M0 345.500H1376" stroke="#3cc814" stroke-width="2"/>
        <g fill="none" stroke="#008200"><path id="bub" d="M642 -1l8 2 5 5 3 9-3 9-5 5-8 2-8-2-5-5-3-9 3-9 5-5z"/><use href="#bub" x="253"/><use href="#bub" y="499"/><use href="#bub" x="253" y="499"/><use href="#bub" x="-626" y="296"/><use href="#bub" x="716" y="296"/></g>
        <path d="M642.500 481V531M895.500 481V531" stroke="#00c800"/>
        <g class="tag" fill="#fff"><text x="642" y="22">7</text><text x="893" y="22">8</text><text x="642" y="521">7</text><text x="893" y="521">8</text><text x="15" y="318">B</text><text x="1357" y="318">B</text></g>
        <g class="wallname" fill="#d200d2"><text x="304" y="303">DQ4</text><text x="1056" y="303">DQ3</text></g>
        <path d="M793 335v10M793 340h5v4M793 344h10" stroke="#ff0" stroke-width="2" fill="none"/>
        <g fill="none" stroke="#00b400"><path d="M490 401.500H575L617 327"/><path d="M1366 401.500H1376"/></g>
        <g class="mark" fill="#00b400"><text x="493" y="387">XGKZ1</text><text x="1370" y="387">XGKZ1</text></g>
        <g class="note" fill="#00c800"><text x="444" y="436">混凝土强度等级<tspan class="grade">C50</tspan></text><text x="1321" y="436">混凝土强度等级<tspan class="grade">C50</tspan></text></g>
        <path d="M69 468V420" stroke="#0f0" stroke-width="4"/><path d="M69 406l5 15H64z" fill="#0f0"/>
        <path d="M69 468H118" stroke="#f00" stroke-width="4"/><path d="M131 468l-15-5v10z" fill="#f00"/>
        <g class="ucs"><text x="81" y="422" fill="#00b400">Y</text><text x="115" y="454" fill="#d00000">X</text></g>
      </svg>
      <div class="picker"><div>
        <label class="s1"><select aria-label="楼层"><option>第-1层</option></select></label><label class="s2"><select aria-label="构件大类"><option>墙</option></select></label><label class="s2"><select aria-label="构件类型"><option>剪力墙</option></select></label><label class="s2"><select aria-label="构件"><option>DQ3</option></select></label>
      </div></div>
    </div>
    <div class="bars">
      <div class="tb t1"><i class="grip"></i><button><svg class="i20"><use href="#ortho"/></svg>正交</button><button class="on"><svg class="i20"><use href="#snap"/></svg>对象捕捉</button><button class="on"><svg class="i20"><use href="#dyn"/></svg>动态输入</button></div>
      <div class="tb t2"><i class="grip"></i><button><svg class="i20"><use href="#cross"/></svg>交点</button><button class="on"><svg class="i20"><use href="#perp"/></svg>垂点</button><button class="on"><svg class="i20"><use href="#mid"/></svg>中点</button><button><svg class="i20"><use href="#vert"/></svg>顶点</button><button><svg class="i20"><use href="#coord"/></svg>坐标</button></div>
      <div class="tb t3"><i class="grip"></i><label class="off"><select aria-label="偏移方式"><option>不偏移</option></select></label><i class="sep"></i>
        <label class="num">X=<input value="0" disabled><svg viewBox="0 0 8 18"><path d="M0 5h8L4 0zM0 13h8l-4 5z" fill="#999"/></svg>mm</label>
        <label class="num">Y=<input value="0" disabled><svg viewBox="0 0 8 18"><path d="M0 5h8L4 0zM0 13h8l-4 5z" fill="#999"/></svg>mm</label><i class="sep"></i>
        <label class="rot"><input type="checkbox">旋转</label><label class="num ang"><input aria-label="旋转角度" class="wide" value="0.000" disabled><svg viewBox="0 0 8 18"><path d="M0 5h8L4 0zM0 13h8l-4 5z" fill="#999"/></svg>°</label></div>
    </div>
    <div class="lower">
      <div class="handle"><button aria-label="关闭面板"><svg viewBox="0 0 12 12"><rect width="12" height="12" fill="#d8a0a0" stroke="#333"/><path d="M2 2l8 8M10 2l-8 8" stroke="#222" stroke-width="2"/></svg></button></div>
      <div class="editor">
        <div class="edbar"><div class="tb">
          <button class="nav" disabled aria-label="首条"><svg><use href="#first"/></svg></button><button class="nav" disabled aria-label="上一条"><svg><use href="#prev"/></svg></button><button class="nav" disabled aria-label="下一条"><svg><use href="#next"/></svg></button><button class="nav" disabled aria-label="末条"><svg><use href="#last"/></svg></button><i class="sep"></i>
          <button class="nav" disabled aria-label="上移"><svg><use href="#up"/></svg></button><button class="nav" disabled aria-label="下移"><svg><use href="#dn"/></svg></button><i class="sep wide-sep"></i>
          <button disabled><svg class="i20"><use href="#ins"/></svg>插入</button><button disabled><svg class="i20"><use href="#del"/></svg>删除</button><button disabled><svg class="i20"><use href="#info"/></svg>钢筋信息</button><button disabled><svg class="i20"><use href="#lib"/></svg>钢筋图库</button><button><svg class="i20"><use href="#other"/></svg>其他<svg class="dd dark"><use href="#down"/></svg></button><button class="shut">关闭</button><i class="sep"></i><output>单构件钢筋总重(kg)：0</output>
        </div></div>
        <div class="sheet">
        <table>
          <colgroup><col class="w41"><col class="w36"><col class="w36"><col class="w67"><col class="w41"><col class="w252"><col class="w66"><col class="w36"><col class="w101"><col class="w66"><col class="w66"><col class="w67"><col class="w66"><col class="w66"><col class="w61"><col class="w214"></colgroup>
          <thead><tr><th></th><th>筋号</th><th>级别</th><th>直径<b>(mm)</b></th><th>图号</th><th class="act">图形</th><th>下料长度</th><th>根数</th><th>变径套筒规格</th><th>接头个数</th><th>总重<b>(kg)</b></th><th>钢筋归类</th><th>搭接形式</th><th>丝扣类型</th><th>流水段</th><th>备注</th></tr></thead>
          <tbody><tr><th>1*</th><td class="caret"></td><td></td><td></td><td></td><td class="act"></td><td></td><td></td><td></td><td></td><td></td><td></td><td></td><td></td><td></td><td></td></tr></tbody>
        </table>
        </div>
      </div>
    </div>
  </section>
</main>

<footer class="status"><span class="p1">X=64023&nbsp; Y=-1709</span><span class="p2">层高:5.1m</span><span class="p3">底标高:-5.2m</span><span class="p4">0</span><span class="p5">按鼠标左键指定第一个角点，或拾取构件图元</span><span class="p6">762.5&nbsp; FPS</span></footer>

<footer class="taskbar">
  <button class="start" aria-label="开始"><svg viewBox="0 0 20 20"><path d="M0 3l8-1.200V9.500H0zM9 1.600L20 0v9.500H9zM0 10.500h8v7.700L0 17zM9 10.500h11V20L9 18.400z"/></svg></button>
  <label class="search"><svg viewBox="0 0 22 22"><circle cx="13" cy="8" r="6.500" fill="none" stroke="#222" stroke-width="1.500"/><path d="M8 13l-7 8" stroke="#222" stroke-width="1.500"/></svg><input placeholder="在这里输入你要搜索的内容"></label>
  <button class="app cortana" aria-label="Cortana"><svg viewBox="0 0 20 20"><circle cx="10" cy="10" r="8" fill="none" stroke="#111" stroke-width="2.500"/></svg></button>
  <button class="app" aria-label="任务视图"><svg class="tv" viewBox="0 0 22 22"><path d="M1 1v3h12V1M1 7h12v8H1zM1 21v-3h12v3M18 1v4M18 10v11" fill="none" stroke="#111" stroke-width="1.500"/><rect x="16.500" y="6" width="3" height="3"/></svg></button>
  <button class="app" aria-label="Edge"><svg viewBox="0 0 30 30"><circle cx="15" cy="15" r="15" fill="#0f6cbd"/><path d="M0 14C1-3 30-5 30 13c0 6-6 8-11 6 4-4 0-10-5-10C8 9 3 11 0 14z" fill="url(#gEdge)"/><path d="M10 16c0 8 8 12 16 9-3 4-8 5-11 5C6 29 4 18 11 12c-1 1-1 2-1 4z" fill="#1a4fa0"/><path d="M13 14c3-3 6 1 5 5 3 3 8 2 11-1-1 4-4 6-7 6-7 0-11-5-9-10z" fill="#e8f3fa"/></svg></button>
  <button class="app run more" aria-label="文件资源管理器"><svg viewBox="0 0 28 26"><path d="M1 2h10l3 4h13v17H1z" fill="#f0a818"/><path d="M1 8h26v15H1z" fill="#ffd35a"/><path d="M5 25V15h18v10h-5v-5h-8v5z" fill="#2d8ade"/></svg></button>
  <button class="app" aria-label="邮件"><svg viewBox="0 0 30 28"><path d="M0 11L15 0l15 11v17H0z" fill="#0a4f9c"/><path d="M3 10h24L15 19z" fill="#fff"/><path d="M0 11l15 10L30 11v17H0z" fill="#2aa6ee"/><path d="M0 28l15-9 15 9z" fill="#1587d8"/></svg></button>
  <button class="app run" aria-label="CAD"><svg viewBox="0 0 30 30"><rect width="30" height="30" rx="3" fill="#777"/><rect x="2" y="2" width="26" height="26" rx="2" fill="#1467bd"/><path d="M9.500 11H7l-2 2v5l2 2h2.500M12 20v-7l2-2h2l2 2v7M12 16h6M21 11h2l2.500 2.500v4L23 20h-2z" fill="none" stroke="#e8f2fc" stroke-width="1.500"/></svg></button>
  <button class="app run now" aria-label="云翻样建模"><svg viewBox="0 0 20 20"><use href="#logo"/></svg></button>
  <button class="app run" aria-label="微信"><svg viewBox="0 0 30 28"><path d="M4 20c-6-6-4-17 8-17 10 0 14 8 10 13-2 4-9 6-13 4l-5 3z" fill="#2dc26b"/><path d="M14 21c-3-5 0-11 7-11 8 0 10 8 6 12l1 4-4-2c-4 1-8 0-10-3z" fill="#eee"/><g fill="#0c6b35"><circle cx="8" cy="10" r="1.500"/><circle cx="15" cy="10" r="1.500"/></g><g fill="#777"><circle cx="19" cy="16" r="1.200"/><circle cx="24" cy="16" r="1.200"/></g></svg></button>
  <div class="power"><svg viewBox="0 0 16 28"><path d="M11 1L1 16h6L3 27 15 11H9z" fill="#fff" stroke="#777"/></svg><span>100%</span><i></i></div>
  <div class="tray">
    <svg class="wx" viewBox="0 0 28 22"><path d="M7 20a6 6 0 0 1-1-12C8 0 20-1 22 7c7 1 6 13 0 13z" fill="url(#gCloud)"/></svg><span class="temp">35°C</span><span class="sky">阴</span>
    <svg class="caretup" viewBox="0 0 16 10"><path d="M1 9l7-7 7 7" fill="none" stroke="#222" stroke-width="1.500"/></svg>
    <svg class="ti" viewBox="0 0 20 20"><path d="M5 16a4 4 0 0 1-1-8c2-5 9-5 11 0 5 1 5 8 0 8z" fill="#e0e0e0" stroke="#222" stroke-width="1.300"/><path d="M4 9c2-5 9-5 11 0l-7 3z" fill="#777"/></svg>
    <svg class="ti" viewBox="0 0 20 20"><path d="M17 1L2 3v15l8 1M17 1v8" fill="none" stroke="#222" stroke-width="1.300"/><path d="M6 10c1-4 7-4 8 0M14 6v4h-4M13 12H7v4" fill="none" stroke="#222"/><circle cx="15" cy="15" r="4.500" fill="#f7941d"/></svg>
    <svg class="ti" viewBox="0 0 20 20"><path d="M7 7h10v8H7z" fill="#111"/><path d="M5 5h14v12H5z" fill="none" stroke="#111"/><path d="M1 1v4M4 1v4M0 5h5M2.500 5v5H5" stroke="#111" fill="none" stroke-width="1.300"/></svg>
    <svg class="ti" viewBox="0 0 20 20"><path d="M1 7.500h3l4-4v13l-4-4H1zM12 7l6 6M18 7l-6 6" fill="none" stroke="#111" stroke-width="1.200"/></svg>
    <span class="ime">中</span>
    <time><span>15:30</span><span>2021/7/15</span></time>
    <svg class="note-i" viewBox="0 0 20 20"><path d="M1 1h18v14h-6v4l-4-4H1z" fill="none" stroke="#111" stroke-width="1.300"/></svg>
  </div>
</footer>
</body>
</html>
```
FILE: styles.css
```css
* { box-sizing: border-box; }
body { margin: 0; min-height: 100vh; display: flex; flex-direction: column; background: #f0f0f0; font: 15px/20px "Open Sans", "Noto Sans CJK SC", sans-serif; color: #1e395b; overflow-x: hidden; }
button, input, select { font: inherit; color: inherit; margin: 0; padding: 0; border: 0; background: none; border-radius: 0; }
button { display: flex; align-items: center; white-space: nowrap; }
select { appearance: none; width: 100%; }
svg { flex: none; display: block; }
ul { list-style: none; margin: 0; padding: 0; }
.defs { position: absolute; width: 0; height: 0; }
.i20 { width: 20px; height: 20px; }
.i18 { width: 18px; height: 18px; }
.i20.sm { padding: 1px; }
.dd { width: 8px; height: 5px; }
.faded { opacity: .5; }

.titlebar { display: grid; grid-template-columns: 714px 1fr auto; height: 35px; background: #fff; color: #111; }
.titlebar h1 { margin: 0; font: 15px/33px Inter, "Noto Sans CJK SC", sans-serif; white-space: nowrap; }
.quick { display: flex; align-items: center; padding: 0 0 3px 2px; }
.bar { width: 2px; height: 18px; background: #888; margin: 0 5px 0 7px; }
.qb { width: 32px; justify-content: center; }
.qb.drop { width: 51px; gap: 14px; }
.winctl { display: flex; padding-right: 2px; }
.winctl button { width: 59px; justify-content: center; }
.winctl svg { width: 14px; height: 14px; }

.tabs { display: flex; height: 34px; background: #fff; border-bottom: 2px solid #92abc9; align-items: flex-end; }
.tabs button { width: 64px; height: 32px; justify-content: center; padding-top: 1px; }
.tabs .file { width: 70px; margin-right: 4px; color: #fff; background: linear-gradient(#2b5fb0, #2a62b8 60%, #4483d8); border: 1px solid #1e4c96; border-radius: 4px 4px 0 0; }
.tabs .on { width: 61px; margin: 0 1px -2px 2px; height: 33px; padding: 0 0 2px; background: #eef5fc; border: 1px solid #92abc9; border-bottom: 0; border-radius: 4px 4px 0 0; }
.tabs .fold { margin-left: auto; width: 32px; }
.fold svg { width: 12px; height: 10px; }

.ribbon { display: flex; height: 133px; background: linear-gradient(#edf5fd, #e3edf8 50%, #d9e5f2); border-bottom: 2px solid #8ea6c4; position: relative; }
.group { display: flex; flex-direction: column; border-right: 1px solid #a3b8d0; box-shadow: 1px 0 #f4f8fd; padding: 6px 0 0 10px; }
.group h2 { margin: 0; font: inherit; text-align: center; line-height: 22px; padding-right: 10px; }
.g1 { width: 163px; } .g2 { width: 336px; } .g3 { width: 373px; } .g4 { width: 241px; } .g5 { width: 731px; }
.cols { display: grid; height: 99px; align-items: center; padding-bottom: 3px; }
.g1 .cols { grid-template-columns: 56px 1fr; }
.g2 .cols { grid-template-columns: 94px 117px 1fr; }
.g3 .cols { grid-template-columns: repeat(4, 66px) 1fr; }
.g4 .cols { grid-template-columns: 114px 1fr; }
.g5 .cols { grid-template-columns: 142px 171px 155px 142px 1fr; }
.rb { height: 32px; gap: 3px; }
.rb .dd { margin-left: 9px; }
.two .rb { height: 43px; }
.rb:disabled { color: #9aa4b0; }
.plain { padding-left: 3px; }
.plain .dd { margin-left: 6px; }
.big { flex-direction: column; width: 46px; gap: 10px; padding-bottom: 10px; }
.big svg { width: 40px; height: 34px; }
.combo { display: flex; align-items: center; width: 66px; height: 32px; background: #f2f7fc; border: 1px solid #a9bdd6; padding: 0 4px; color: #111; font-size: 16px; }

.speed { position: absolute; right: 34px; top: 12px; display: flex; align-items: center; color: #555; }
.pill { width: 102px; height: 49px; margin-right: -33px; border-radius: 24px; background: #fff; box-shadow: 0 1px 6px #8ea0b8; font-size: 11px; line-height: 18px; padding: 6px 0 0 14px; }
.pill span { display: flex; align-items: center; gap: 4px; }
.pill svg { width: 9px; height: 11px; }
.pill b { width: 4px; }
.dial { position: relative; width: 66px; height: 66px; border-radius: 50%; background: #fff; box-shadow: 0 1px 6px #8ea0b8; display: flex; align-items: center; justify-content: center; color: #111; gap: 1px; }
.dial svg { position: absolute; inset: 0; }
.dial strong { font-weight: 400; font-size: 28px; }
.dial small { font-size: 11px; padding-top: 10px; }

main { flex: 1; display: flex; border-top: 4px solid #bccde2; font-family: "Liberation Serif", "Noto Sans CJK SC", serif; color: #000; }
main b { font: 13px/20px "Liberation Mono", monospace; }
.side { width: 26px; padding-top: 10px; background: #f3f3f3; }
.side button { position: relative; width: 26px; padding: 14px 0 31px 4px; margin-bottom: -13px; font-size: 18px; line-height: 20px; white-space: normal; align-items: flex-start; }
.side span { width: 18px; word-break: break-all; position: relative; text-align: left; }
.side svg { position: absolute; inset: 0; width: 26px; height: 100%; fill: #fafafa; stroke: #777; }
.side .on { z-index: 1; font-weight: 700; }
.side .on svg { fill: #a6caf0; }
.treepane { width: 252px; border-left: 2px solid #9aacc2; display: flex; flex-direction: column; }
.treebar { display: flex; height: 32px; gap: 10px; padding-left: 6px; border-bottom: 2px solid #a0a5ab; align-items: center; }
.treebar svg { width: 20px; height: 20px; }
.tree { flex: 1; background: #fff; border-right: 2px solid #a0a8b4; border-bottom: 1px solid #a0a8b4; padding-top: 2px; margin-bottom: 2px; }
.row { display: flex; align-items: center; height: 20px; white-space: nowrap; }
.row .ch { width: 12px; height: 12px; margin: 0 8px 0 9px; }
.row.open .ch { height: 8px; }
.row .i20 { margin-right: 6px; }
.tree ul { margin-left: 16px; padding-left: 24px; background: repeating-linear-gradient(#888 0 1px, transparent 1px 2px) 0 0 / 1px 100% no-repeat; }
.tree ul li { display: flex; height: 20px; padding-left: 11px; background: repeating-linear-gradient(#888 0 1px, transparent 1px 2px) 0 0 / 1px 100% no-repeat, repeating-linear-gradient(90deg, #888 0 1px, transparent 1px 2px) 0 10px / 13px 1px no-repeat; }
.tree ul li:last-child { background-size: 1px 10px, 13px 1px; }
.tree ul span { display: flex; align-items: center; padding: 0 5px 0 3px; height: 20px; white-space: nowrap; }
.tree ul .i20 { margin-right: 5px; }
.tree .sel { background: #d9d9d9; }
.cadpane { width: 260px; margin: 0 4px 0 3px; display: flex; flex-direction: column; padding-bottom: 2px; }
.cadhead { display: flex; height: 20px; border: 1px solid #9a9a9a; margin-top: 1px; align-items: center; gap: 12px; padding-right: 5px; }
.cadhead span { flex: 1; }
.cadhead svg { width: 12px; height: 12px; }
.cadbody { flex: 1; background: #fff; border: 1px solid #a0a8b4; border-top: 0; padding-top: 3px; }
.cadbody label { display: flex; align-items: center; height: 18px; padding-left: 12px; white-space: nowrap; }
.cadbody .ch { width: 9px; height: 12px; }
.cadbody i { width: 8px; border-top: 1px dotted #888; margin: 0 1px 0 2px; }
input[type=checkbox] { appearance: none; flex: none; width: 15px; height: 15px; border: 1px solid #333; background: #fff; }
.cadbody input { margin-right: 4px; }
.cadbody .part { background: #333; box-shadow: inset 0 0 0 2px #fff; }

.work { flex: 1; min-width: 0; display: flex; flex-direction: column; font-family: "Open Sans", "Noto Sans CJK SC", sans-serif; }
.canvas { position: relative; aspect-ratio: 1376 / 532; background: #000; }
.drawing { width: 100%; height: 100%; font-family: Roboto, "Noto Sans CJK SC", sans-serif; font-weight: 300; }
.tag { font-size: 21px; }
.wallname { font-size: 21px; }
.mark { font-size: 28px; }
.note { font-size: 20px; }
.grade { font-size: 24px; }
.ucs { font-size: 18px; }
.picker { position: absolute; left: 11px; top: 3px; width: 375px; padding: 8px; background: #dbe8f6; border: 1px solid #aebccb; }
.picker div { display: flex; gap: 5px; padding: 3px 7px; border: 1px solid #7f9fc4; background: #f0f0f0; height: 37px; }
.picker label, .off { display: flex; background: #fff; height: 27px; padding-left: 3px; position: relative; }
.picker .s1 { width: 70px; } .picker .s2 { width: 85px; }
.picker select, .off select { height: 27px; background: linear-gradient(#f0f0f0, #f0f0f0) right / 12px 100% no-repeat; }
.picker label::after, .off::after { content: ""; position: absolute; right: 3px; top: 12px; border: 3px solid transparent; border-top: 5px solid #000; border-bottom: 0; }

.bars { display: flex; height: 36px; border-top: 1px solid #fff; margin-bottom: 4px; }
.tb { display: flex; align-items: center; border-right: 1px solid #a0a0a0; border-bottom: 2px solid #a8a8a8; padding: 0 3px; white-space: nowrap; }
.tb > * { flex: none; }
.tb button { height: 30px; gap: 4px; padding: 0 3px 0 4px; color: #000; border: 1px solid transparent; }
.tb button:disabled { color: #a0a0a0; }
.tb .on { background: #f8f8f8; border-color: #9a9a9a #fff #fff #9a9a9a; }
.tb .grip { width: 3px; height: 30px; border-right: 1px solid #a0a0a0; margin-right: 3px; }
.tb .sep { width: 1px; align-self: stretch; background: #a0a0a0; }
.t1 { width: 264px; gap: 2px; } .t1 button { padding: 0 2px 0 4px; }
.t2 { width: 331px; gap: 1px; }
.t3 { width: 520px; padding: 0 0 0 3px; color: #a0a0a0; }
.off { width: 68px; color: #000; margin: 0 7px 0 4px; }
.num { display: flex; align-items: center; padding-left: 4px; }
.num input { width: 69px; height: 26px; border: 1px solid #fff; text-align: right; padding-right: 24px; margin: 0 4px 0 7px; color: #888; }
.num svg { width: 8px; height: 18px; margin: 0 9px 0 -18px; }
.rot { display: flex; align-items: center; color: #000; gap: 11px; padding-left: 5px; }
.rot input { border-color: #777; width: 14px; height: 14px; }
.num .wide { width: 82px; }

.lower { flex: 1; display: flex; }
.handle { width: 16px; background: radial-gradient(circle, #9fb2ca 1px, transparent 2px) 0 0 / 7px 7px, #d6e2f0; margin-bottom: 2px; }
.handle button { padding: 1px; }
.handle svg { width: 13px; height: 13px; }
.editor { flex: 1; min-width: 0; display: flex; flex-direction: column; }
.edbar { display: flex; height: 36px; border-bottom: 2px solid #b0b6c0; }
.edbar .tb { border-top: 1px solid #fff; padding: 0 5px 0 0; }
.edbar .nav { width: 30px; justify-content: center; padding: 0; }
.nav svg { width: 14px; height: 16px; }
.edbar .tb button:not(.nav) { padding: 0 4px 0 5px; }
.edbar .tb .shut { padding: 0 7px; }
.edbar output { padding: 0 5px 0 14px; color: #111; }
.edbar .wide-sep { margin-right: 2px; }
.dark { filter: brightness(0); }
.sheet { flex: 1; background: #fff; border-right: 2px solid #a9b8cc; margin: 0 1px 2px 1px; }
table { table-layout: fixed; width: 1282px; border-collapse: collapse; font-family: "Liberation Serif", "Noto Sans CJK SC", serif; }
th, td { border: 1px solid #c4c4c4; height: 24px; padding: 0; font-weight: 400; white-space: nowrap; text-align: center; overflow: hidden; }
thead th { background: linear-gradient(#fff, #ececec); border-top: 0; }
thead .act { background: linear-gradient(#f9d790, #f1bd60); color: #6a1050; }
tbody th { background: #ffd28c; color: #6a1050; font: 700 14px/20px "Liberation Mono", monospace; }
td.act { background: #d8e9f8; outline: 3px solid #808080; outline-offset: -1px; }
td.caret { border-right: 1px solid #000; }
.w36 { width: 36px; } .w41 { width: 41px; } .w61 { width: 61px; } .w66 { width: 66px; } .w67 { width: 67px; } .w101 { width: 101px; } .w214 { width: 214px; } .w252 { width: 252px; }

.status { display: flex; height: 25px; border-top: 1px solid #d8e0ea; gap: 2px; font: 15px/22px "Liberation Serif", "Noto Sans CJK SC", serif; color: #000; }
.status span { border: 1px solid #a0a0a0; border-right-color: #fff; border-bottom-color: #fff; padding-left: 1px; white-space: nowrap; }
.p1 { width: 185px; } .p2 { width: 98px; } .p3 { width: 123px; } .p4 { width: 61px; } .status .p5 { flex: 1; } .p6 { width: 88px; }

.taskbar { display: flex; height: 51px; background: linear-gradient(90deg, #cfdfe9, #dce3e8 30%, #c9d8e2 50%, #d2e1ec 65%, #cdd5db 85%, #d6d6d6); color: #222; align-items: stretch; }
.start { width: 60px; justify-content: center; }
.start svg { width: 20px; height: 20px; }
.search { width: 430px; background: #fff; border: 1px solid #c4c8cc; display: flex; align-items: center; gap: 14px; padding-left: 13px; }
.search svg { width: 22px; height: 22px; }
.search input { flex: 1; font-size: 19px; line-height: 28px; outline: 0; }
.search input::placeholder { color: #333; opacity: 1; }
.app { width: 62px; justify-content: center; border-bottom: 3px solid transparent; padding-top: 3px; }
.app svg { width: 30px; height: 30px; }
.app.cortana { width: 61px; }
.app.cortana svg, .app .tv { width: 22px; height: 22px; }
.app .tv { width: 20px; }
.app.run { border-bottom-color: #0078d7; width: 52px; margin: 0 5px; }
.app.now { background: #edf3f8; width: 62px; margin: 0; }
.power { display: flex; align-items: center; margin-left: 257px; }
.power svg { width: 16px; height: 28px; }
.power span { border: 2px solid #fff; outline: 1px solid #888; background: #17994a; color: #fff; font-size: 13px; line-height: 19px; padding: 0 2px; }
.power i { width: 4px; height: 12px; background: #fff; border: 1px solid #888; }
.tray { display: flex; align-items: center; margin-left: auto; padding-right: 32px; font-size: 18px; line-height: 24px; }
.wx { width: 28px; height: 22px; }
.temp { margin: 0 9px 0 12px; }
.sky { margin-right: 22px; }
.caretup { width: 16px; height: 10px; margin-right: 42px; }
.ti { width: 20px; height: 20px; margin-right: 10px; }
.ime { margin-right: 12px; }
time { display: flex; flex-direction: column; align-items: center; font-size: 16px; width: 80px; margin-right: 20px; }
.note-i { width: 20px; height: 20px; }
```
